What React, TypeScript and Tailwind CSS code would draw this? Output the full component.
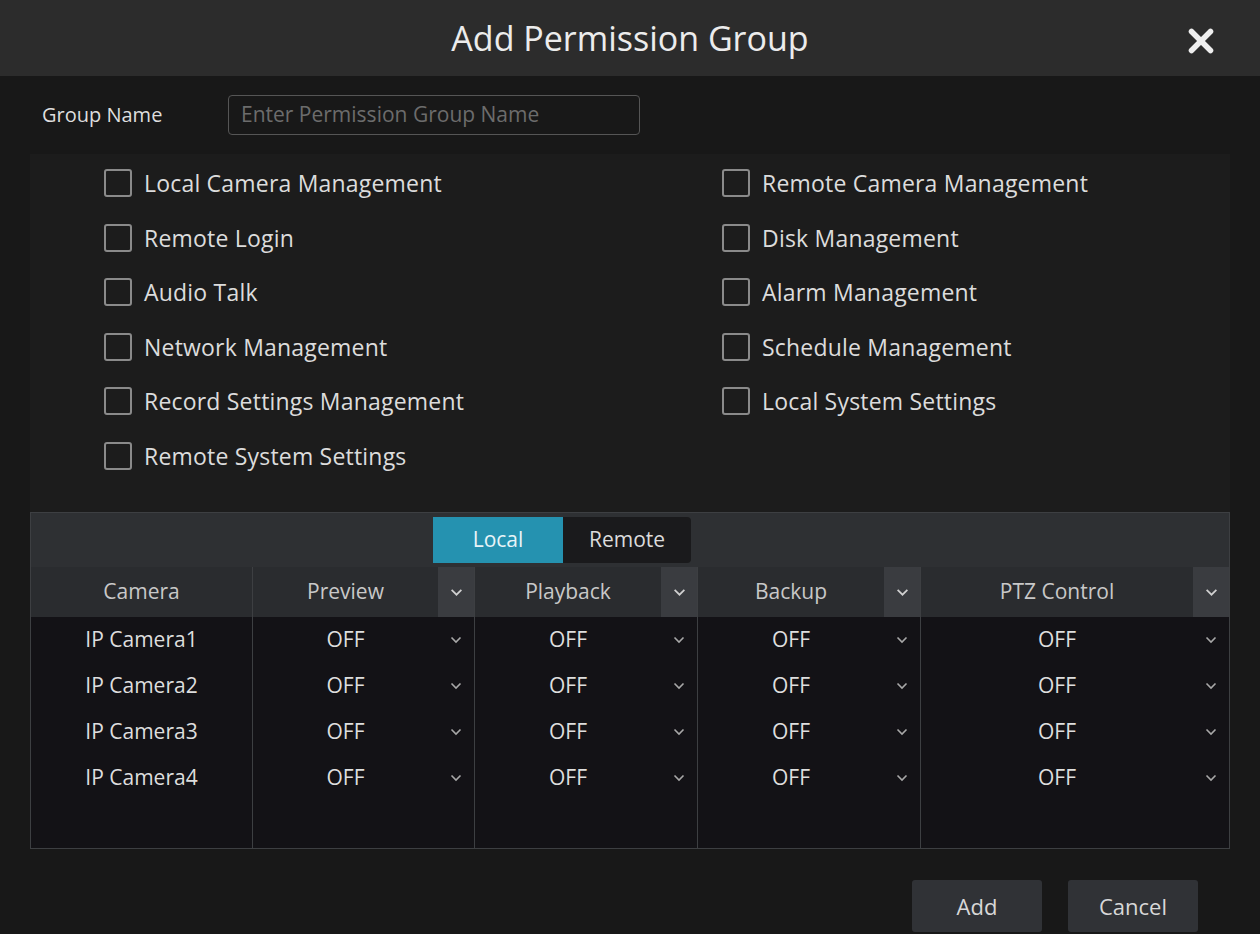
import { X } from "lucide-react";

const left = ["Local Camera Management", "Remote Login", "Audio Talk", "Network Management", "Record Settings Management", "Remote System Settings"];
const right = ["Remote Camera Management", "Disk Management", "Alarm Management", "Schedule Management", "Local System Settings"];
const cams = ["IP Camera1", "IP Camera2", "IP Camera3", "IP Camera4"];
const cols = ["Preview", "Playback", "Backup", "PTZ Control"];

const Chevron = ({ className = "" }: { className?: string }) => (
  <svg viewBox="0 0 12 8" className={className} fill="none" stroke="currentColor" strokeWidth="1.6">
    <path d="M1.5 1.5 6 6l4.5-4.5" />
  </svg>
);

const Check = ({ label }: { label: string }) => (
  <div className="flex items-center h-[54.5px] gap-[12px]">
    <div className="w-[28px] h-[28px] border-2 border-[#8a8a8a] rounded-[3px] bg-[#1c1c1c]" />
    <span className="text-[23px] text-[#dcdcdc] tracking-[0.2px]">{label}</span>
  </div>
);

export default function App() {
  return (
    <div className="w-[1260px] h-[934px] bg-[#181818] overflow-hidden flex flex-col" style={{ fontFamily: '"Open Sans", "Noto Sans", sans-serif' }}>
      <div className="h-[76px] bg-[#2c2c2c] flex items-center justify-center relative shrink-0">
        <span className="text-[34px] text-[#ececec]">Add Permission Group</span>
        <X className="absolute right-[40px] top-[22px] w-[38px] h-[38px] text-[#eeeeee]" strokeWidth={3.5} />
      </div>
      <div className="flex items-center h-[78px] pl-[42px]">
        <span className="text-[20px] text-[#dedede] w-[186px]">Group Name</span>
        <div className="w-[412px] h-[40px] border border-[#555] rounded-[4px] flex items-center px-[12px] text-[21px] text-[#6c6c6c]">Enter Permission Group Name</div>
      </div>
      <div className="mx-[30px] h-[360px] bg-[#1c1c1c] grid grid-cols-[618px_1fr] pl-[74px] pt-[2px]">
        <div>{left.map(l => <Check key={l} label={l} />)}</div>
        <div>{right.map(l => <Check key={l} label={l} />)}</div>
      </div>
      <div className="mx-[30px] mt-[-2px] border border-[#3d3f42] bg-[#131216] h-[337px] flex flex-col">
        <div className="h-[54px] bg-[#2e3033] flex items-center pl-[402px] shrink-0">
          <div className="flex h-[46px] text-[21px]">
            <div className="w-[130px] bg-[#2592b0] text-[#e8f4f8] flex items-center justify-center">Local</div>
            <div className="w-[128px] bg-[#1a1a1c] text-[#dcdcdc] flex items-center justify-center rounded-r-[4px]">Remote</div>
          </div>
        </div>
        <div className="grid grid-cols-[222px_222px_223px_223px_1fr] flex-1 text-[21px] text-[#dedede]">
          <div className="border-r border-[#3d3f42]">
            <div className="h-[50px] bg-[#2a2c2f] flex items-center justify-center text-[#c8c8c8]">Camera</div>
            {cams.map(c => <div key={c} className="h-[46px] flex items-center justify-center">{c}</div>)}
          </div>
          {cols.map((h, i) => (
            <div key={h} className={i < 3 ? "border-r border-[#3d3f42]" : ""}>
              <div className="h-[50px] bg-[#2a2c2f] flex items-center">
                <span className="flex-1 text-center text-[#c8c8c8]">{h}</span>
                <div className="w-[36px] h-full bg-[#3a3c40] flex items-center justify-center text-[#d0d0d0]"><Chevron className="w-[13px] h-[9px]" /></div>
              </div>
              {cams.map(c => (
                <div key={c} className="h-[46px] flex items-center">
                  <span className="flex-1 text-center">OFF</span>
                  <div className="w-[36px] flex justify-center text-[#a8a8a8]"><Chevron className="w-[12px] h-[8px]" /></div>
                </div>
              ))}
            </div>
          ))}
        </div>
      </div>
      <div className="flex justify-end gap-[26px] pr-[62px] mt-[31px]">
        <div className="w-[130px] h-[52px] bg-[#303236] rounded-[3px] flex items-center justify-center text-[22px] text-[#d8d8d8]">Add</div>
        <div className="w-[130px] h-[52px] bg-[#303236] rounded-[3px] flex items-center justify-center text-[22px] text-[#d8d8d8]">Cancel</div>
      </div>
    </div>
  );
}
